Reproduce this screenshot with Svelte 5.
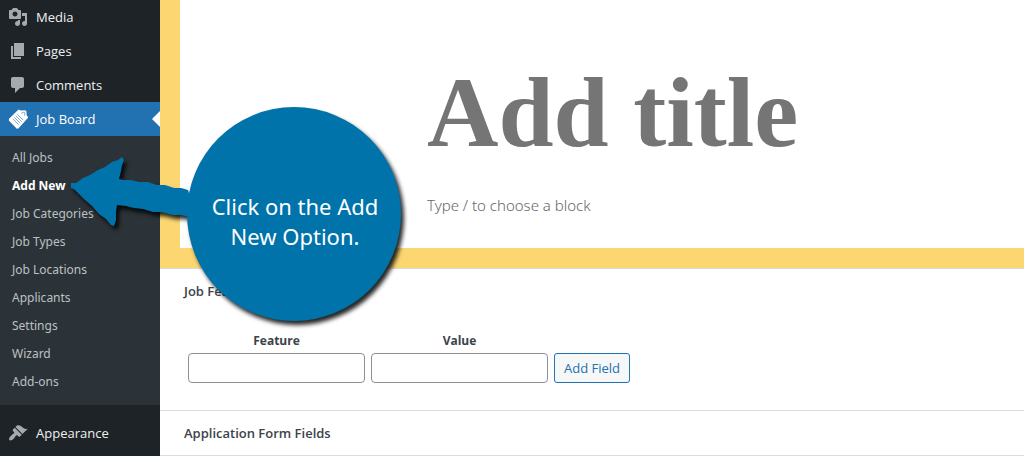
<script lang="ts">
  interface MenuItem {
    label: string;
    icon: string;
  }

  const topItems: MenuItem[] = [
    {
      label: "Media",
      icon: "M13 11V4c0-.55-.45-1-1-1h-1.67L9 1H5L3.67 3H2c-.55 0-1 .45-1 1v7c0 .55.45 1 1 1h10c.55 0 1-.45 1-1zM7 4.5c1.38 0 2.5 1.12 2.5 2.5S8.38 9.5 7 9.5 4.5 8.38 4.5 7 5.62 4.5 7 4.5zM14 6h5v10.5c0 1.38-1.12 2.5-2.5 2.5S14 17.88 14 16.5s1.12-2.5 2.5-2.5c.17 0 .34.02.5.05V9h-3V6zm-4 8.05V13h2v3.5c0 1.38-1.12 2.5-2.5 2.5S7 17.88 7 16.5 8.12 14 9.5 14c.17 0 .34.02.5.05z",
    },
    { label: "Pages", icon: "M6 15V2h10v13H6zm-1 1h8v2H3V5h2v11z" },
    {
      label: "Comments",
      icon: "M5 2h9c1.1 0 2 .9 2 2v7c0 1.1-.9 2-2 2h-2l-5 5v-5H5c-1.1 0-2-.9-2-2V4c0-1.1.9-2 2-2z",
    },
  ];

  const appearance: MenuItem = {
    label: "Appearance",
    icon: "M14.48 11.06L7.41 3.99l1.5-1.5c.5-.56 2.3-.47 3.51.32 1.21.8 1.43 1.28 2.91 2.1 1.18.64 2.45 1.26 4.45.85zm-.71.71L6.7 4.7 4.93 6.47c-.39.39-.39 1.02 0 1.41l1.06 1.06c.39.39.39 1.03 0 1.42-.6.6-1.43 1.11-2.21 1.69-.35.26-.7.53-1.01.84C1.43 14.23.4 16.08 1.4 17.07c.99 1 2.84-.03 4.18-1.36.31-.31.58-.66.85-1.02.57-.78 1.08-1.61 1.69-2.21.39-.39 1.02-.39 1.41 0l1.06 1.06c.39.39 1.02.39 1.41 0z",
  };

  const jobItems = [
    "All Jobs",
    "Add New",
    "Job Categories",
    "Job Types",
    "Job Locations",
    "Applicants",
    "Settings",
    "Wizard",
    "Add-ons",
  ];

  let current = $state("Add New");
  let title = $state("");
  let block = $state("");
  let feature = $state("");
  let value = $state("");

  function addField() {
    feature = "";
    value = "";
  }
</script>

{#snippet menuItem(item: MenuItem)}
  <li>
    <a class="menu-link" href="#{item.label}">
      <svg class="icon" viewBox="0 0 20 20" aria-hidden="true"><path d={item.icon} /></svg>
      {item.label}
    </a>
  </li>
{/snippet}

<div class="admin">
  <nav class="sidebar" aria-label="Main menu">
    <ul>
      {#each topItems as item}
        {@render menuItem(item)}
      {/each}
      <li>
        <a class="menu-link active" href="#jobs">
          <svg class="icon" viewBox="0 0 20 20" aria-hidden="true">
            <path d="M9.5 1.5 11 .4l1.4 1.2 4.6-.4 1.4 1 .4 4.6L20.4 8.2 10.4 19.6 8.8 19.8.8 11.4 1 9.8z" />
            <path
              class="lines"
              d="M9.4 5.4l5.8 5.8M7.9 6.9l5.8 5.8M6.4 8.4l5.8 5.8M4.9 9.9l5.8 5.8M13.2 4.2l2.6-1 1.2.9-.4 2.6"
            />
          </svg>
          Job Board
        </a>
        <ul class="submenu">
          {#each jobItems as label}
            <li>
              <a href="#{label}" class:current={label === current} onclick={() => (current = label)}>{label}</a>
            </li>
          {/each}
        </ul>
      </li>
      {@render menuItem(appearance)}
    </ul>
  </nav>

  <main>
    <div class="editor">
      <input class="title" aria-label="Add title" placeholder="Add title" bind:value={title} />
      <input class="block" aria-label="Add block" placeholder="Type / to choose a block" bind:value={block} />
    </div>

    <section class="metabox">
      <h2>Job Features</h2>
      <div class="fields">
        <div class="field">
          <label for="feature">Feature</label>
          <input id="feature" bind:value={feature} />
        </div>
        <div class="field">
          <label for="value">Value</label>
          <input id="value" bind:value />
        </div>
        <button type="button" onclick={addField}>Add Field</button>
      </div>
    </section>

    <section class="metabox">
      <h2>Application Form Fields</h2>
    </section>
    <section class="metabox"></section>
  </main>

  <div class="callout">
    <svg viewBox="0 0 340 224" aria-hidden="true">
      <path
        d="M2 82 L7 82 L14 77 L21 74 L29 69 L36 66 L43 61 L49 59 L53 56 L55 59 L53 64 L52 70 L50 78 L55 79 L62 79 L70 81 L79 81 L88 84 L96 84 L105 87 L112 87 L119 89 L126 117 L112 114 L104 114 L92 111 L84 111 L74 108 L65 107 L57 105 L48 104 L47 111 L47 119 L45 125 L42 124 L37 118 L30 113 L23 105 L16 99 L10 93 L5 88 L2 87 Z"
      />
      <circle cx="225" cy="113" r="107" />
    </svg>
    <p>Click on the Add New Option.</p>
  </div>
</div>

<style>
  :global(body) {
    margin: 0;
    background: #fff;
    font-family: "Open Sans", "Noto Sans", sans-serif;
    font-size: 13px;
    color: #3c434a;
  }

  .admin {
    position: relative;
    display: flex;
    min-height: 100vh;
    overflow: hidden;
  }

  .sidebar {
    flex: 0 0 160px;
    background: #1d2327;
  }

  ul {
    list-style: none;
    margin: 0;
    padding: 0;
  }

  .menu-link {
    position: relative;
    display: flex;
    align-items: center;
    gap: 8px;
    height: 34px;
    padding-left: 8px;
    color: #f0f0f1;
    text-decoration: none;
  }

  .menu-link.active {
    background: #2271b1;
    color: #fff;
  }

  .menu-link.active::after {
    content: "";
    position: absolute;
    right: 0;
    top: 9px;
    border: 8px solid transparent;
    border-left-width: 0;
    border-right-color: #fff;
  }

  .icon {
    width: 20px;
    height: 20px;
    fill: #a7aaad;
  }

  .active .icon {
    fill: #fff;
  }

  .icon .lines {
    fill: none;
    stroke: #2271b1;
    stroke-width: 0.6;
  }

  .submenu {
    margin-bottom: 11px;
    padding: 8px 0 9px;
    background: #2c3338;
  }

  .submenu a {
    display: block;
    padding: 0 12px;
    font-family: "Noto Sans", sans-serif;
    font-size: 12px;
    line-height: 28px;
    color: #bcc0c4;
    text-decoration: none;
  }

  .submenu a.current {
    color: #fff;
    font-weight: 700;
  }

  main {
    flex: 1;
    min-width: 0;
  }

  .editor {
    display: flex;
    flex-direction: column;
    gap: 24px;
    padding: 57px 0 29px 247px;
    border: solid #fcd670;
    border-width: 0 0 20px 20px;
  }

  .editor input {
    width: 100%;
    padding: 0;
    border: 0;
    outline: 0;
    background: none;
    color: #444;
  }

  .editor input::placeholder {
    color: #757575;
    opacity: 1;
  }

  .title {
    height: 110px;
    font-family: "Liberation Serif", serif;
    font-size: 99px;
    font-weight: 700;
  }

  .block {
    height: 28px;
    font-family: "Noto Sans", sans-serif;
    font-size: 15px;
    font-weight: 300;
  }

  .editor .block::placeholder {
    color: #666;
  }

  .metabox {
    border-top: 1px solid #dcdcde;
  }

  h2 {
    margin: 0;
    padding: 0 24px;
    font-size: 13px;
    font-weight: 600;
    line-height: 44px;
  }

  .fields {
    display: flex;
    align-items: flex-end;
    gap: 6px;
    padding: 16px 28px 27px;
  }

  .field {
    display: flex;
    flex-direction: column;
    width: 177px;
  }

  .field label {
    font-size: 12px;
    font-weight: 700;
    line-height: 24px;
    text-align: center;
  }

  .field input {
    box-sizing: border-box;
    width: 100%;
    height: 30px;
    padding: 0 8px;
    border: 1px solid #8c8f94;
    border-radius: 4px;
    font: inherit;
  }

  button {
    height: 30px;
    padding: 0 9px;
    border: 1px solid #2271b1;
    border-radius: 3px;
    background: #f6f7f7;
    color: #2271b1;
    font: inherit;
  }

  /* tutorial bubble pointing at the menu entry */
  .callout {
    position: absolute;
    top: 101px;
    left: 69px;
    width: 340px;
    height: 224px;
    pointer-events: none;
  }

  .callout svg {
    display: block;
    overflow: visible;
    fill: #0073aa;
    filter: drop-shadow(3px 4px 2px rgba(0, 0, 0, 0.85));
  }

  .callout p {
    position: absolute;
    top: 90px;
    left: 131px;
    width: 190px;
    margin: 0;
    color: #fff;
    font-family: "Noto Sans", sans-serif;
    font-size: 22px;
    line-height: 30px;
    text-align: center;
  }
</style>
